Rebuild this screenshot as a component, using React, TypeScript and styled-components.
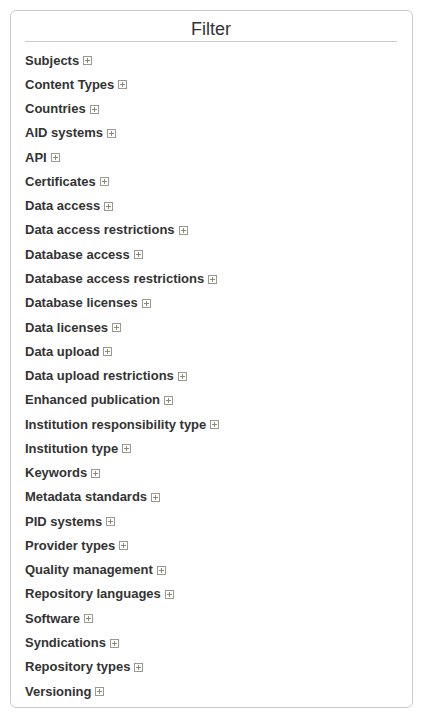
import React from 'react';
import styled, { createGlobalStyle } from 'styled-components';

const GlobalStyle = createGlobalStyle`
  body {
    margin: 0;
    background: #fff;
    font-family: "Liberation Sans", Arial, sans-serif;
    color: #333;
  }
`;

const Panel = styled.div`
  margin: 10px 0 0 10px;
  width: 403px;
  box-sizing: border-box;
  border: 1px solid #ccc;
  border-radius: 6px;
  padding: 8px 15px 4px 14px;
`;

const Title = styled.h3`
  margin: 0;
  padding-bottom: 2px;
  font-size: 18px;
  line-height: 20px;
  font-weight: normal;
  text-align: center;
  color: #333;
  border-bottom: 1px solid #ccc;
`;

const List = styled.ul`
  list-style: none;
  margin: 6px 0 0;
  padding: 0;
`;

const Item = styled.li`
  display: flex;
  align-items: center;
  height: 24.27px;
  font-size: 13px;
  font-weight: bold;
  color: #333;
`;

const Toggle = styled.svg`
  margin-left: 4px;
  margin-top: 1px;
  flex: none;
`;

const PlusBox = () => (
  <Toggle width="9" height="9" viewBox="0 0 9 9">
    <rect x="0.5" y="0.5" width="8" height="8" fill="#fff" stroke="#9a9a8c" />
    <path d="M2 4.5H7M4.5 2V7" stroke="#8a8a7c" strokeWidth="1" />
  </Toggle>
);

const filters = [
  'Subjects',
  'Content Types',
  'Countries',
  'AID systems',
  'API',
  'Certificates',
  'Data access',
  'Data access restrictions',
  'Database access',
  'Database access restrictions',
  'Database licenses',
  'Data licenses',
  'Data upload',
  'Data upload restrictions',
  'Enhanced publication',
  'Institution responsibility type',
  'Institution type',
  'Keywords',
  'Metadata standards',
  'PID systems',
  'Provider types',
  'Quality management',
  'Repository languages',
  'Software',
  'Syndications',
  'Repository types',
  'Versioning',
];

const App = () => {
  return (
    <>
      <GlobalStyle />
      <Panel>
        <Title>Filter</Title>
        <List>
          {filters.map((name) => (
            <Item key={name}>
              {name}
              <PlusBox />
            </Item>
          ))}
        </List>
      </Panel>
    </>
  );
};

export default App;
